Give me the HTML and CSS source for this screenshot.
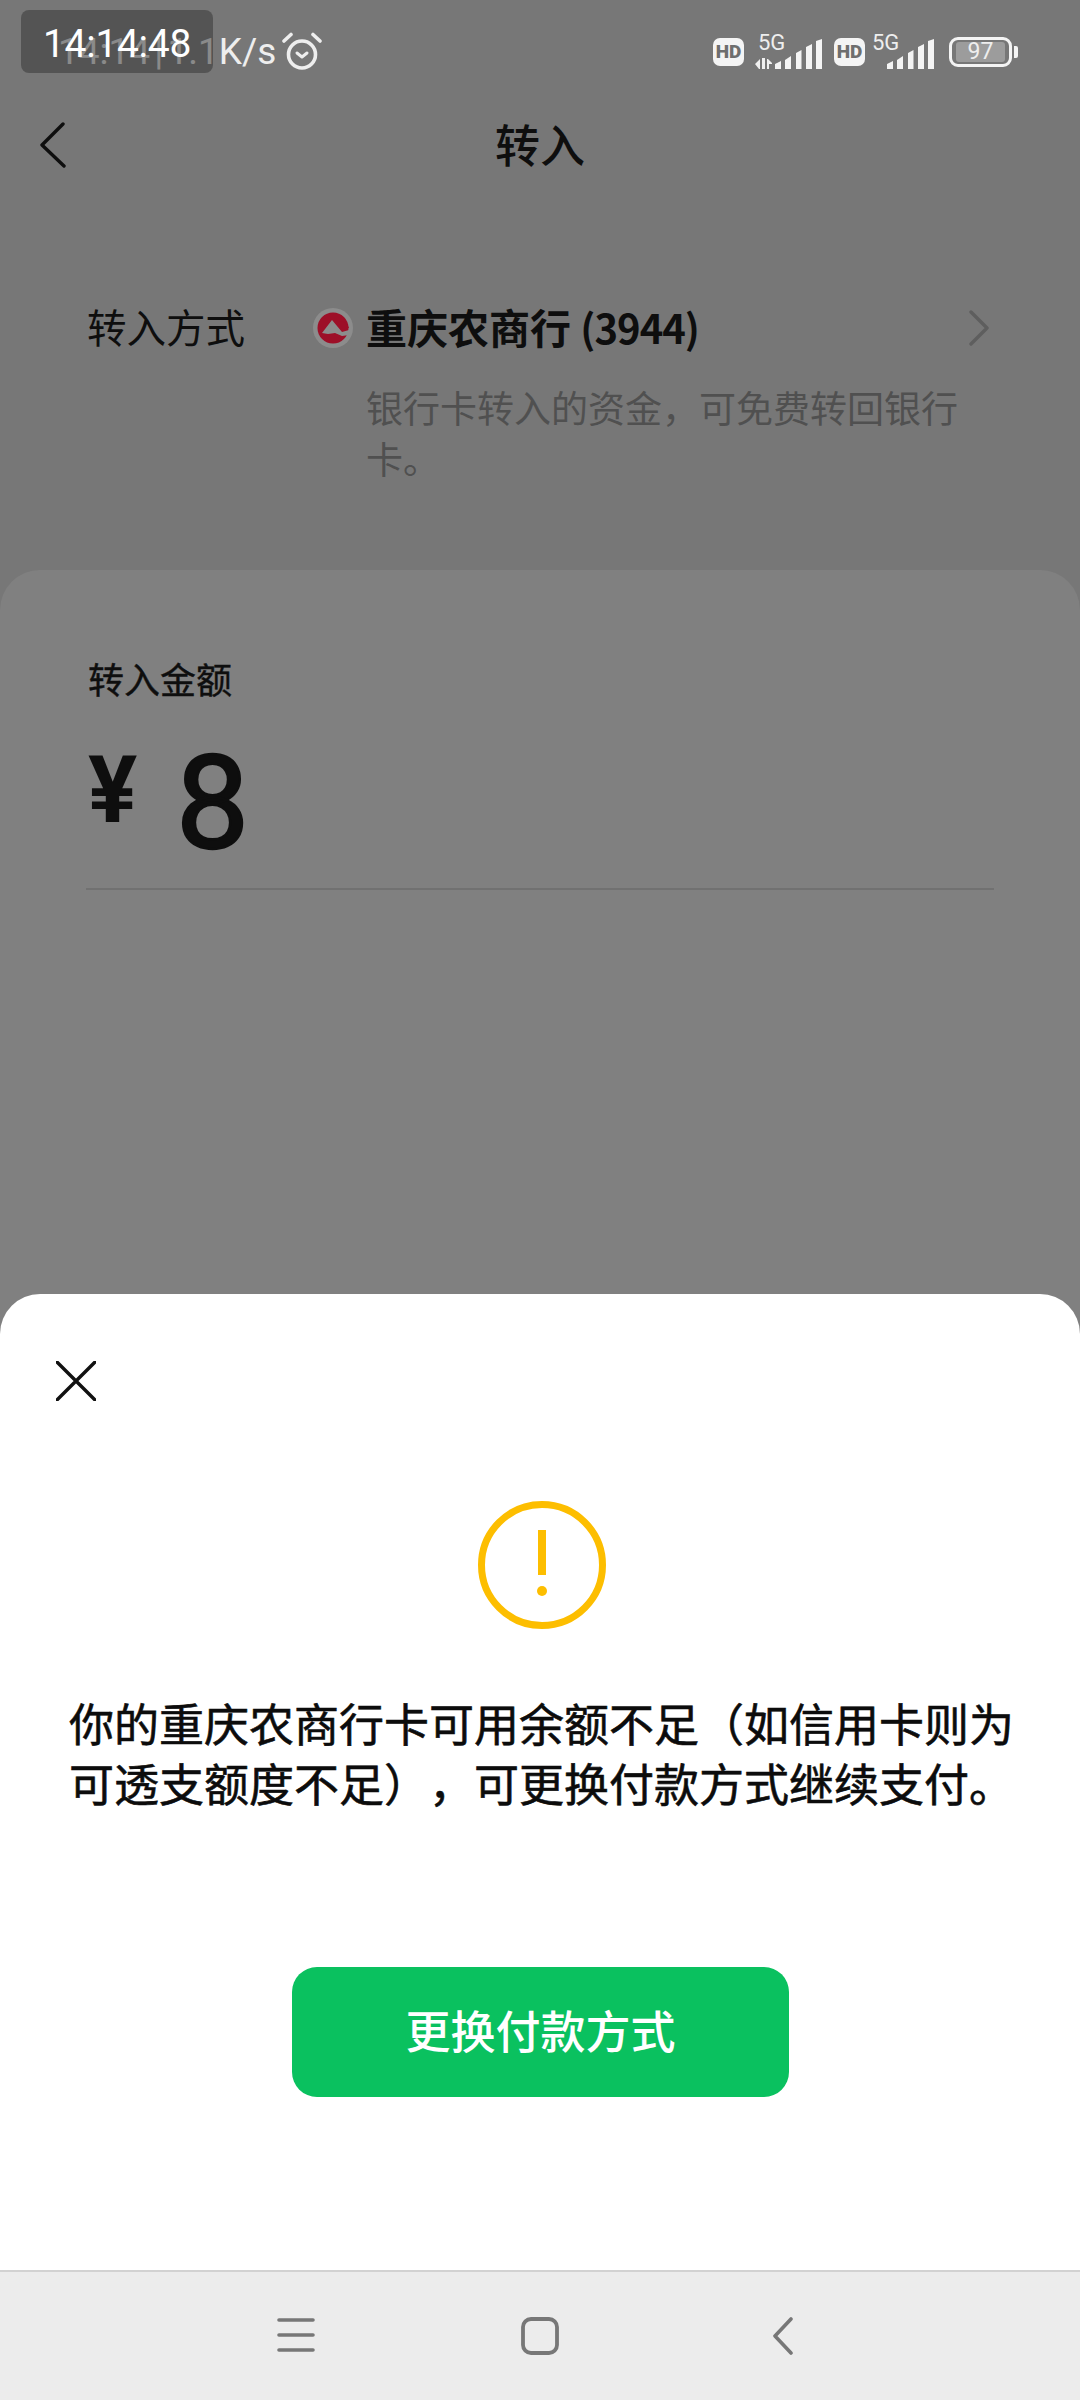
FILE: index.html
```html
<!DOCTYPE html>
<html lang="zh-CN">
<head>
	<meta charset="utf-8">
	<title>转入</title>
	<link rel="stylesheet" href="styles.css">
</head>
<body>
	<div class="page">
		<div class="main">
			<!-- 状态栏 -->
			<div class="status">
				<div class="status-left">
					<span class="speed">14:14 | 1.1K/s</span>
					<svg class="alarm" width="40" height="38" viewBox="0 0 40 38" fill="none" stroke="#eee">
						<circle cx="20" cy="22.500" r="13.500" stroke-width="3.600"/>
						<path d="M2 9 9 2.500M38 9 31 2.500" stroke-width="3.600" stroke-linecap="round"/>
						<path d="M15 21 20 25 25 21" stroke-width="3" stroke-linecap="round" stroke-linejoin="round"/>
					</svg>
				</div>
				<div class="status-right">
					<span class="hd">HD</span>
					<svg class="sig-a" width="68" height="40" viewBox="0 0 68 40">
						<text x="3" y="19" class="sig-text">5G</text>
						<path d="M0 33 5 28V38H4ZM7 27H10V38H7ZM12 28H13L17 32V33H14V38H12Z" fill="#f0f0f0"/>
						<path d="M20 33 26 30V38H20ZM30 29 36 25V38H30ZM41 22 46.500 19V38H41ZM51 16 57 13V38H51ZM61 10 67 8V38H61Z" fill="#f4f4f4"/>
					</svg>
					<span class="hd hd-b">HD</span>
					<svg class="sig-b" width="64" height="40" viewBox="0 0 64 40">
						<text x="0" y="19" class="sig-text">5G</text>
						<path d="M15 33 21 30V38H15ZM25 29 31 25V38H25ZM36 22 41.500 19V38H36ZM46 16 52 13V38H46ZM56 10 62 8V38H56Z" fill="#f4f4f4"/>
					</svg>
					<div class="battery"><span class="level">97</span></div>
					<span class="nub"></span>
				</div>
			</div>

			<!-- 标题 -->
			<div class="head">
				<svg class="back" width="26" height="46" viewBox="0 0 26 46" fill="none" stroke="#0e0e0e" stroke-width="3.400" stroke-linecap="round" stroke-linejoin="round">
					<path d="M23 2 2 23 24 44"/>
				</svg>
				<h1>转入</h1>
			</div>

			<!-- 转入方式 -->
			<div class="way">
				<div class="way-top">
					<span class="way-label">转入方式</span>
					<span class="bank-icon">
						<svg width="40" height="40" viewBox="0 0 40 40">
							<circle cx="20" cy="20" r="20" fill="#8c8c8c"/>
							<circle cx="20" cy="20" r="15.500" fill="#9d0f28"/>
							<path d="M9 25 19 12 29 24 36 22V27L29 28 22 25 15 26Z" fill="#8c8c8c"/>
							<path d="M26 13A10 10 0 0 1 36 20H30L26 16Z" fill="#9d0f28"/>
						</svg>
					</span>
					<span class="bank-name">重庆农商行 <span class="bank-no">(3944)</span></span>
					<svg class="way-more" width="20" height="36" viewBox="0 0 20 36" fill="none" stroke="#5e5e5e" stroke-width="3.400" stroke-linecap="round" stroke-linejoin="round">
						<path d="M2 2 18 18 2 34"/>
					</svg>
				</div>
				<p class="way-desc">银行卡转入的资金，可免费转回银行卡。</p>
			</div>

			<!-- 金额卡片 -->
			<div class="card">
				<div class="card-label">转入金额</div>
				<div class="amount">
					<span class="yen">¥</span>
					<span class="num">8</span>
				</div>
				<div class="line"></div>
			</div>

			<!-- 弹层 -->
			<div class="sheet">
				<svg class="close" width="40" height="40" viewBox="0 0 40 40" stroke="#111" stroke-width="3.400" stroke-linecap="round">
					<path d="M1 1 39 39M39 1 1 39"/>
				</svg>
				<svg class="warn" width="128" height="128" viewBox="0 0 128 128" fill="#fdbe00">
					<circle cx="64" cy="64" r="60.500" fill="none" stroke="#fdbe00" stroke-width="7"/>
					<rect x="60" y="29" width="8" height="45"/>
					<circle cx="64" cy="90" r="5"/>
				</svg>
				<p class="msg">你的重庆农商行卡可用余额不足（如信用卡则为可透支额度不足），可更换付款方式继续支付。</p>
				<a class="btn" href="javascript:;">更换付款方式</a>
			</div>

			<div class="tip">14:14:48</div>
		</div>

		<!-- 导航条 -->
		<div class="nav">
			<svg class="nav-menu" width="38" height="34" viewBox="0 0 38 34" stroke="#777" stroke-width="3.600" stroke-linecap="round">
				<path d="M2 2H36M2 17H36M2 32H36"/>
			</svg>
			<svg class="nav-home" width="38" height="38" viewBox="0 0 38 38" fill="none" stroke="#777" stroke-width="3.800">
				<rect x="2" y="2" width="34" height="34" rx="8"/>
			</svg>
			<svg class="nav-back" width="22" height="38" viewBox="0 0 22 38" fill="none" stroke="#777" stroke-width="3.600" stroke-linecap="round" stroke-linejoin="round">
				<path d="M19 2 3 19 19 36"/>
			</svg>
		</div>
	</div>
</body>
</html>
```

FILE: styles.css
```css
* {
	margin: 0;
	padding: 0;
	box-sizing: border-box;
}
body {
	width: 1080px;
	height: 2400px;
	overflow: hidden;
	font-family: "Noto Sans CJK SC", sans-serif;
	color: #0e0e0e;
	background: #777;
}
.page {
	height: 2400px;
	display: flex;
	flex-direction: column;
}
.main {
	flex: 1;
	position: relative;
	display: flex;
	flex-direction: column;
	background: #777;
}

.status {
	height: 104px;
	padding: 0 62px 0 58px;
	display: flex;
	justify-content: space-between;
	align-items: center;
}
.status-left {
	display: flex;
	align-items: center;
	gap: 6px;
}
.speed {
	font: 37px/44px Roboto, sans-serif;
	color: #eee;
	word-spacing: -5px;
}
.alarm {
	margin-top: -2px;
}
.status-right {
	display: flex;
	align-items: center;
}
.hd {
	width: 31px;
	height: 28px;
	border-radius: 7px;
	background: #f4f4f4;
	color: #6e6e6e;
	font: 900 19px/28px Roboto, sans-serif;
	text-align: center;
}
.sig-a {
	margin-left: 11px;
	margin-top: -2px;
}
.hd-b {
	margin-left: 11px;
}
.sig-b {
	margin-left: 7px;
	margin-top: -2px;
}
.sig-text {
	font: 22px Roboto, sans-serif;
	fill: #eee;
}
.battery {
	width: 63px;
	height: 30px;
	margin-left: 13px;
	padding: 2px 4px;
	border: 3px solid #f4f4f4;
	border-radius: 9px;
}
.level {
	display: block;
	height: 20px;
	border-radius: 3px;
	background: #9c9c9c;
	color: #eee;
	font: 23px/20px Roboto, sans-serif;
	text-align: center;
}
.nub {
	width: 4px;
	height: 12px;
	margin-left: 2px;
	border-radius: 0 2px 2px 0;
	background: #f4f4f4;
}

.tip {
	position: absolute;
	left: 21px;
	top: 10px;
	width: 192px;
	height: 63px;
	padding: 12px 0 0 22px;
	border-radius: 8px;
	background: rgba(57, 57, 57, .55);
	color: #fff;
	font: 39px/44px Roboto, sans-serif;
	letter-spacing: -.3px;
}

.head {
	height: 82px;
	position: relative;
	display: flex;
	align-items: center;
	justify-content: center;
}
.head h1 {
	margin-top: -2px;
	font-size: 45px;
	line-height: 60px;
	font-weight: 500;
}
.back {
	position: absolute;
	left: 40px;
	top: 18px;
}

.way {
	margin-top: 114px;
	padding-left: 87px;
}
.way-top {
	height: 52px;
	padding-right: 91px;
	display: flex;
	align-items: center;
}
.way-label {
	width: 226px;
	font-size: 39.500px;
	line-height: 52px;
}
.bank-icon {
	width: 40px;
	height: 40px;
	margin: 4px 13px 0 0;
}
.bank-name {
	flex: 1;
	font-size: 41px;
	line-height: 52px;
	font-weight: 700;
}
.bank-no {
	font-size: 40px;
	letter-spacing: -1px;
}
.way-more {
	margin-top: 4px;
}
.way-desc {
	width: 600px;
	margin: 30px 0 0 279px;
	font-size: 37px;
	line-height: 51px;
	color: #505050;
	text-spacing-trim: space-all;
}

.card {
	flex: 1;
	margin-top: 86px;
	padding: 84px 86px 0;
	border-radius: 40px 40px 0 0;
	background: #808080;
}
.card-label {
	padding-left: 2px;
	font-size: 36px;
	line-height: 48px;
	-webkit-text-stroke: .4px #0e0e0e;
}
.amount {
	height: 186px;
	padding-left: 2px;
	display: flex;
	align-items: flex-start;
}
.yen {
	width: 88px;
	margin-top: 43px;
	font: 700 92px/92px Roboto, sans-serif;
}
.num {
	margin-top: 37px;
	font: 400 130px/130px Roboto, sans-serif;
	-webkit-text-stroke: 2.500px #0e0e0e;
}
.line {
	height: 2px;
	background: #717171;
}

.sheet {
	position: absolute;
	left: 0;
	right: 0;
	bottom: 0;
	height: 976px;
	padding-top: 67px;
	border-radius: 40px 40px 0 0;
	background: #fff;
	display: flex;
	flex-direction: column;
}
.close {
	margin-left: 56px;
}
.warn {
	margin: 100px 0 0 478px;
}
.msg {
	margin-top: 64px;
	padding: 0 50px 0 69px;
	font-size: 45px;
	line-height: 60px;
	font-weight: 400;
	color: #0c0c0c;
	-webkit-text-stroke: .6px #0c0c0c;
	text-spacing-trim: space-all;
}
.btn {
	width: 497px;
	height: 130px;
	margin: 154px 0 0 292px;
	border-radius: 25px;
	background: #0ac15f;
	color: #fff;
	font-size: 45px;
	line-height: 126px;
	font-weight: 500;
	text-align: center;
	text-decoration: none;
}

.nav {
	height: 130px;
	position: relative;
	border-top: 2px solid #d2d2d2;
	background: #ececec;
}
.nav svg {
	position: absolute;
}
.nav-menu {
	left: 277px;
	top: 46px;
}
.nav-home {
	left: 521px;
	top: 45px;
}
.nav-back {
	left: 772px;
	top: 45px;
}
```
